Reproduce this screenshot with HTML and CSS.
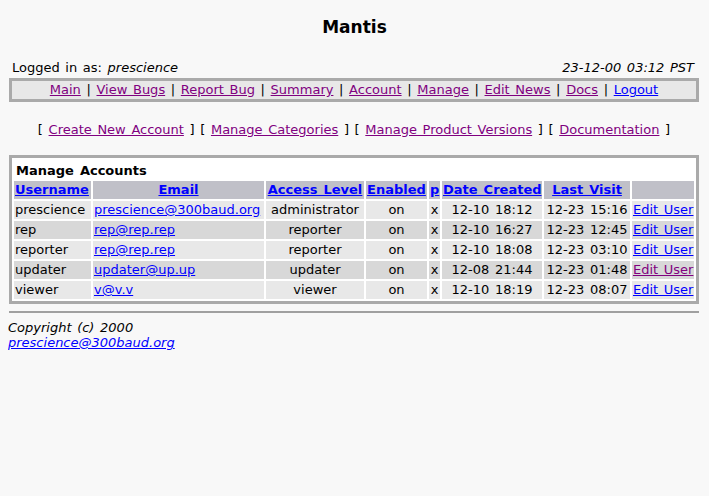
FILE: index.html
```html
<!DOCTYPE html>
<html>
<head>
<meta charset="utf-8">
<title>Mantis</title>
<link rel="stylesheet" href="styles.css">
</head>
<body>
<div class="title">Mantis</div>

<div class="wrap">
  <div class="status">
    <span>Logged in as: <i>prescience</i></span>
    <i class="date">23-12-00 03:12 PST</i>
  </div>

  <div class="nav">
    <a class="v" href="#">Main</a> | <a class="v" href="#">View Bugs</a> | <a class="v" href="#">Report Bug</a> | <a class="v" href="#">Summary</a> | <a class="v" href="#">Account</a> | <a class="v" href="#">Manage</a> | <a class="v" href="#">Edit News</a> | <a class="v" href="#">Docs</a> | <a href="#">Logout</a>
  </div>

  <div class="sublinks">
    [ <a class="v" href="#">Create New Account</a> ] [ <a class="v" href="#">Manage Categories</a> ] [ <a class="v" href="#">Manage Product Versions</a> ] [ <a class="v" href="#">Documentation</a> ]
  </div>

  <div class="box">
    <table class="accounts">
      <colgroup>
        <col class="c-user"><col class="c-email"><col class="c-level"><col class="c-enabled"><col class="c-p"><col class="c-date"><col class="c-last"><col class="c-edit">
      </colgroup>
      <tr><td class="caption" colspan="8">Manage Accounts</td></tr>
      <tr class="head">
        <td class="left"><a href="#">Username</a></td>
        <td><a href="#">Email</a></td>
        <td><a href="#">Access Level</a></td>
        <td><a href="#">Enabled</a></td>
        <td><a href="#">p</a></td>
        <td><a href="#">Date Created</a></td>
        <td><a href="#">Last Visit</a></td>
        <td></td>
      </tr>
      <tr class="r1">
        <td class="left">prescience</td><td class="left"><a href="#">prescience@300baud.org</a></td><td>administrator</td><td>on</td><td>x</td><td>12-10 18:12</td><td>12-23 15:16</td><td class="left"><a href="#">Edit User</a></td>
      </tr>
      <tr class="r2">
        <td class="left">rep</td><td class="left"><a href="#">rep@rep.rep</a></td><td>reporter</td><td>on</td><td>x</td><td>12-10 16:27</td><td>12-23 12:45</td><td class="left"><a href="#">Edit User</a></td>
      </tr>
      <tr class="r1">
        <td class="left">reporter</td><td class="left"><a href="#">rep@rep.rep</a></td><td>reporter</td><td>on</td><td>x</td><td>12-10 18:08</td><td>12-23 03:10</td><td class="left"><a href="#">Edit User</a></td>
      </tr>
      <tr class="r2">
        <td class="left">updater</td><td class="left"><a href="#">updater@up.up</a></td><td>updater</td><td>on</td><td>x</td><td>12-08 21:44</td><td>12-23 01:48</td><td class="left"><a class="v" href="#">Edit User</a></td>
      </tr>
      <tr class="r1">
        <td class="left">viewer</td><td class="left"><a href="#">v@v.v</a></td><td>viewer</td><td>on</td><td>x</td><td>12-10 18:19</td><td>12-23 08:07</td><td class="left"><a href="#">Edit User</a></td>
      </tr>
    </table>
  </div>

  <div class="rule"></div>
</div>

<div class="footer">
  <i>Copyright (c) 2000</i><br>
  <a class="mail" href="#"><i>prescience@300baud.org</i></a>
</div>
</body>
</html>
```

FILE: styles.css
```css
html, body {
  background: #f8f8f8;
}
body {
  margin: 8px;
  font-family: "DejaVu Sans", Verdana, sans-serif;
  font-size: 13px;
  line-height: 16px;
  word-spacing: 1.5px;
  color: #000;
}
a {
  color: #0000ff;
  text-decoration: underline;
}
a.v {
  color: #800080;
}
.title {
  margin-top: 9px;
  text-align: center;
  font-weight: bold;
  font-size: 17px;
  line-height: 20px;
}
.wrap {
  margin: 0 2px 0 1px;
}
.status {
  margin-top: 23px;
  display: flex;
  justify-content: space-between;
  padding: 0 5px 0 3px;
}
.nav {
  margin-top: 2px;
  border: 3px solid #aaaaaa;
  background: #e8e8e8;
  text-align: center;
  padding: 1px 0;
}
.sublinks {
  margin-top: 20px;
  text-align: center;
}
.box {
  margin-top: 17px;
  border: 3px solid #aaaaaa;
  background: #ffffff;
}
.accounts {
  width: 100%;
  table-layout: fixed;
  border-collapse: separate;
  border-spacing: 2px;
}
.c-user { width: 77px; }
.c-email { width: 171px; }
.c-level { width: 98px; }
.c-enabled { width: 61px; }
.c-p { width: 11px; }
.c-date { width: 100px; }
.c-last { width: 86px; }
.c-edit { width: 62px; }
.accounts td {
  padding: 1px 1px;
  text-align: center;
  white-space: nowrap;
  overflow: hidden;
}
.accounts td.left {
  text-align: left;
}
.accounts td.caption {
  text-align: left;
  font-weight: bold;
  padding: 3px 2px 0;
}
.head td {
  background: #c0c0c8;
  font-weight: bold;
}
.r1 td {
  background: #e8e8e8;
}
.r2 td {
  background: #d8d8d8;
}
.rule {
  margin-top: 7px;
  border-top: 2px solid #a0a0a0;
}
.footer {
  margin-top: 7px;
  line-height: 15px;
}
.footer a.mail {
  color: #0000ff;
}
```
